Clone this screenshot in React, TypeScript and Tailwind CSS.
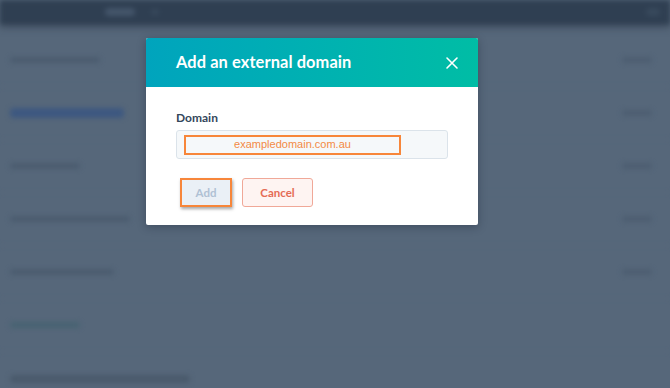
import React from "react";

const rows = [
  { w: 90, right: true, color: "bg-[#4b5c6f]" },
  { w: 114, right: true, color: "bg-[#3d5880]", bar: true },
  { w: 70, right: true, color: "bg-[#4b5c6f]" },
  { w: 120, right: true, color: "bg-[#4b5c6f]" },
  { w: 104, right: true, color: "bg-[#4b5c6f]" },
  { w: 70, right: false, color: "bg-[#476372]" },
];

export default function App() {
  return (
    <div className="relative w-[670px] h-[388px] overflow-hidden bg-[#56677a]" style={{ fontFamily: "Lato, 'Open Sans', sans-serif" }}>
      {/* blurred page behind */}
      <div className="flex flex-col blur-[2.5px]">
        <div className="h-[24px] bg-[#2f3f52] flex items-center px-[10px] gap-[16px] shadow-[0_3px_6px_rgba(30,40,55,0.5)]">
          <div className="w-[79px]" />
          <div className="w-[30px] h-[8px] bg-[#44556a] rounded" />
          <div className="w-[8px] h-[6px] bg-[#38495c] rounded" />
          <div className="flex-1" />
          <div className="w-[14px] h-[8px] bg-[#38495c] rounded" />
        </div>
        <div className="h-[10px]" />
        {rows.map((r, i) => (
          <div key={i} className="h-[53px] flex items-center justify-between px-[10px] border-b border-[#5a6b7e]">
            <div className={`${r.bar ? "h-[10px]" : "h-[6px]"} ${r.color} rounded`} style={{ width: r.w }} />
            {r.right ? <div className="w-[30px] h-[6px] bg-[#4d5e71] rounded mr-[8px]" /> : null}
          </div>
        ))}
        <div className="h-[40px] flex items-center px-[10px] pt-[14px]">
          <div className="w-[180px] h-[8px] bg-[#4a5a6c] rounded" />
        </div>
      </div>

      {/* modal */}
      <div className="absolute left-[146px] top-[38px] w-[332px] h-[187px] bg-white rounded-[2px] shadow-[0_2px_8px_rgba(20,30,45,0.35)] overflow-hidden flex flex-col">
        <div className="h-[49px] bg-gradient-to-r from-[#00a4bd] to-[#00bda5] flex items-center justify-between pl-[30px] pr-[19px]">
          <div className="text-white font-bold text-[16.4px] tracking-[0.1px]">Add an external domain</div>
          <svg width="14" height="14" viewBox="0 0 14 14" fill="none" stroke="white" strokeWidth="1.6" strokeLinecap="round">
            <path d="M2 2 L12 12 M12 2 L2 12" />
          </svg>
        </div>
        <div className="flex flex-col px-[30px] pt-[24px]">
          <div className="text-[12px] font-bold text-[#33475b] leading-[14px]">Domain</div>
          <div className="mt-[5px] w-[272px] h-[29px] bg-[#f5f8fa] border border-[#dbe3ea] rounded-[3px] flex items-center pl-[7px]">
            <div className="w-[217px] h-[20px] border-2 border-[#f7863a] flex items-center justify-center text-[11px] text-[#f38a45]" style={{ fontFamily: "'Liberation Sans', Arial, sans-serif" }}>
              exampledomain.com.au
            </div>
          </div>
          <div className="mt-[19px] flex items-center gap-[10px] pl-[4px]">
            <div className="w-[52px] h-[29px] bg-[#eaf0f6] border-2 border-[#f7863a] shadow-[1px_2px_3px_rgba(0,0,0,0.35)] flex items-center justify-center text-[11.5px] font-bold text-[#b0c1d4]">
              Add
            </div>
            <div className="w-[71px] h-[29px] bg-[#fef4f2] border border-[#f0a898] rounded-[3px] flex items-center justify-center text-[11.5px] font-bold text-[#e56b55]">
              Cancel
            </div>
          </div>
        </div>
      </div>
    </div>
  );
}
